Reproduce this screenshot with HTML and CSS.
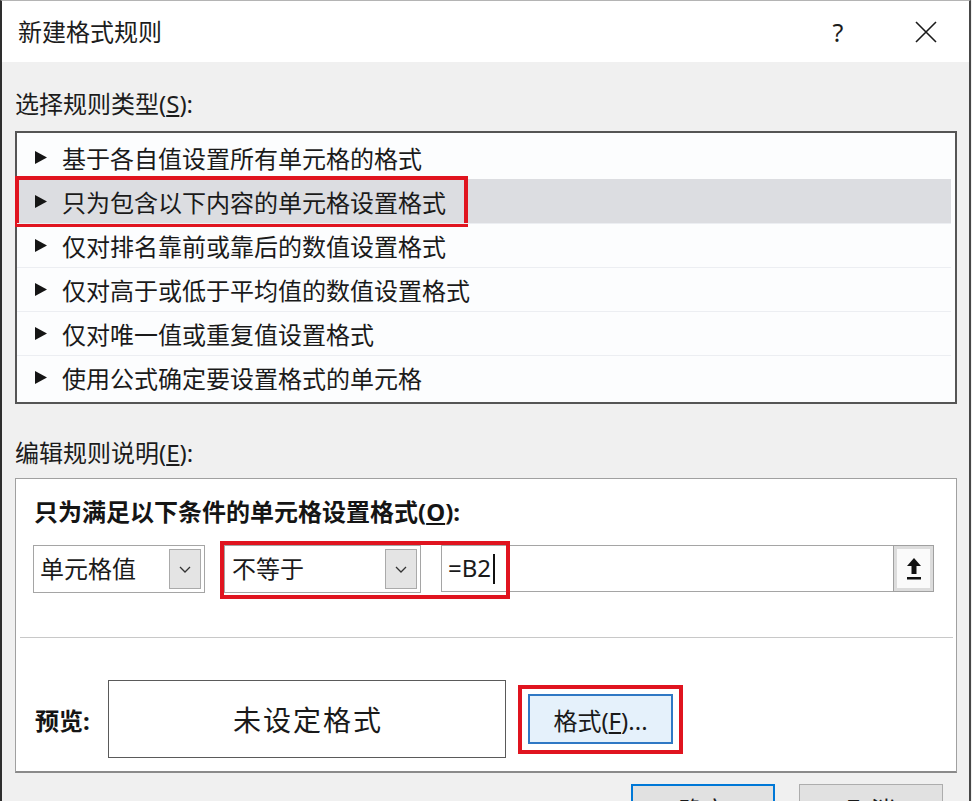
FILE: index.html
```html
<!DOCTYPE html>
<html lang="zh-CN">
<head>
<meta charset="utf-8">
<title>新建格式规则</title>
<link rel="stylesheet" href="styles.css">
</head>
<body>
<div class="window">
  <div class="titlebar">
    <span class="title">新建格式规则</span>
    <span class="tb-btn help">?</span>
    <span class="tb-btn close">
      <svg width="22" height="22" viewBox="0 0 22 22"><path d="M1 1 L21 21 M21 1 L1 21" stroke="#1a1a1a" stroke-width="1.6" fill="none"/></svg>
    </span>
  </div>
  <div class="content">
    <div class="section-label first">选择规则类型(<u>S</u>):</div>
    <div class="rule-list">
      <div class="rule"><svg class="tri" width="12" height="13" viewBox="0 0 12 13"><polygon points="0,0 12,6.5 0,13" fill="#151515"/></svg><span>基于各自值设置所有单元格的格式</span></div>
      <div class="rule selected"><svg class="tri" width="12" height="13" viewBox="0 0 12 13"><polygon points="0,0 12,6.5 0,13" fill="#151515"/></svg><span>只为包含以下内容的单元格设置格式</span><span class="mark mark-rule"></span></div>
      <div class="rule"><svg class="tri" width="12" height="13" viewBox="0 0 12 13"><polygon points="0,0 12,6.5 0,13" fill="#151515"/></svg><span>仅对排名靠前或靠后的数值设置格式</span></div>
      <div class="rule"><svg class="tri" width="12" height="13" viewBox="0 0 12 13"><polygon points="0,0 12,6.5 0,13" fill="#151515"/></svg><span>仅对高于或低于平均值的数值设置格式</span></div>
      <div class="rule"><svg class="tri" width="12" height="13" viewBox="0 0 12 13"><polygon points="0,0 12,6.5 0,13" fill="#151515"/></svg><span>仅对唯一值或重复值设置格式</span></div>
      <div class="rule"><svg class="tri" width="12" height="13" viewBox="0 0 12 13"><polygon points="0,0 12,6.5 0,13" fill="#151515"/></svg><span>使用公式确定要设置格式的单元格</span></div>
    </div>
    <div class="section-label second">编辑规则说明(<u>E</u>):</div>
    <div class="edit-panel">
      <div class="cond-label">只为满足以下条件的单元格设置格式(<u>O</u>):</div>
      <div class="cond-row">
        <div class="combo combo-a">
          <span class="combo-text">单元格值</span>
          <span class="dd"><svg width="12" height="7" viewBox="0 0 12 7"><polyline points="1,1 6,6 11,1" stroke="#333" stroke-width="1.3" fill="none"/></svg></span>
        </div>
        <div class="combo combo-b">
          <span class="combo-text">不等于</span>
          <span class="dd"><svg width="12" height="7" viewBox="0 0 12 7"><polyline points="1,1 6,6 11,1" stroke="#333" stroke-width="1.3" fill="none"/></svg></span>
        </div>
        <div class="input-group">
          <div class="input-field"><span class="val">=B2</span><span class="caret"></span></div>
          <span class="ref-btn"><svg width="16" height="24" viewBox="0 0 16 24"><path d="M8 1 L15 9 L10.5 9 L10.5 17 L5.5 17 L5.5 9 L1 9 Z" fill="#111"/><rect x="1" y="20" width="14" height="2.5" fill="#111"/></svg></span>
        </div>
        <span class="mark mark-cond"></span>
      </div>
      <div class="sep"></div>
      <div class="preview-row">
        <span class="preview-label">预览:</span>
        <div class="preview-box">未设定格式</div>
        <div class="format-wrap">
          <button class="format-btn">格式(<u>F</u>)...</button>
          <span class="mark mark-fmt"></span>
        </div>
      </div>
    </div>
    <div class="actions">
      <button class="btn primary">确定</button>
      <button class="btn">取消</button>
    </div>
  </div>
</div>
</body>
</html>
```

FILE: styles.css
```css
* { box-sizing: border-box; }
html, body {
  margin: 0;
  height: 801px;
  overflow: hidden;
  background: #f0f0f0;
}
body {
  font-family: "Noto Sans", "Noto Sans CJK SC", sans-serif;
  color: #1a1a1a;
}
.window {
  width: 971px;
  min-height: 801px;
  border-left: 2px solid #2e2e2e;
  border-right: 2px solid #474747;
  border-top: 1px solid #b4b4b4;
  background: #f0f0f0;
}
.titlebar {
  height: 61px;
  background: #ffffff;
  display: flex;
  align-items: center;
  padding-left: 16px;
  padding-right: 23px;
}
.title {
  font-size: 24px;
  line-height: 34px;
  color: #1c1c1c;
}
.tb-btn {
  width: 40px;
  height: 40px;
  display: flex;
  align-items: center;
  justify-content: center;
}
.help {
  margin-left: auto;
  font-size: 25px;
  color: #1c1c1c;
}
.close { margin-left: 48px; }
.content {
  padding: 0 12px 0 13px;
}
.section-label {
  font-size: 24px;
  line-height: 34px;
  color: #1c1c1c;
}
.section-label.first { margin-top: 25px; }
.section-label.second { margin-top: 32px; }
.rule-list {
  margin-top: 10px;
  border: 2px solid #555555;
  background: #fcfdfe;
  padding: 2px 4px 3px 0;
}
.rule {
  position: relative;
  height: 44px;
  display: flex;
  align-items: center;
  padding-left: 18px;
  font-size: 24px;
  color: #1a1a1a;
}
.rule + .rule { border-top: 1px solid #eceef2; }
.rule.selected { background: #dcdde1; border-top-color: #dcdde1; }
.tri { flex: none; margin-right: 15px; }
.mark {
  position: absolute;
  border: 4px solid #e0141f;
  pointer-events: none;
}
.mark-rule { left: -2px; top: -4px; width: 453px; height: 51px; }
.edit-panel {
  margin-top: 8px;
  background: #ffffff;
  border: 1px solid #a0a0a0;
  border-bottom: 2px solid #8a8a8a;
  padding-bottom: 13px;
}
.cond-label {
  margin: 16px 0 0 18px;
  font-size: 24px;
  line-height: 34px;
  font-weight: 700;
  color: #151515;
}
.cond-row {
  position: relative;
  margin-top: 16px;
  height: 48px;
  display: flex;
  align-items: flex-start;
  padding-left: 17px;
}
.combo {
  height: 48px;
  border: 1px solid #a5a5a5;
  display: flex;
  align-items: center;
  font-size: 24px;
  color: #1a1a1a;
}
.combo-text { flex: 1; margin-top: -4px; }
.combo-a { width: 172px; padding-left: 6px; padding-right: 3px; }
.combo-b { width: 197px; margin-left: 19px; padding-left: 7px; padding-right: 3px; }
.dd {
  width: 32px;
  height: 40px;
  background: #e4e4e4;
  border: 1px solid #aaaaaa;
  display: flex;
  align-items: center;
  justify-content: center;
}
.input-group {
  margin-left: 20px;
  width: 493px;
  height: 47px;
  display: flex;
}
.input-field {
  flex: 1;
  border: 1px solid #a5a5a5;
  border-right: none;
  display: flex;
  align-items: center;
  padding-left: 6px;
  font-size: 24px;
  color: #1a1a1a;
}
.val { margin-top: -3px; }
.caret {
  width: 2px;
  height: 30px;
  background: #111;
  margin-left: 2px;
}
.ref-btn {
  width: 41px;
  height: 47px;
  border: 1px solid #a0a0a0;
  background: #fafafa;
  box-shadow: inset 0 0 0 3px #dcdcdc;
  display: flex;
  align-items: center;
  justify-content: center;
}
.mark-cond { left: 204px; top: -4px; width: 290px; height: 58px; }
.sep {
  margin: 44px 3px 0 4px;
  height: 1px;
  background: #c8c8c8;
}
.preview-row {
  margin-top: 42px;
  display: flex;
  align-items: center;
  padding-left: 19px;
}
.preview-label {
  width: 73px;
  font-size: 24px;
  font-weight: 700;
  color: #151515;
}
.preview-box {
  width: 398px;
  height: 78px;
  border: 1px solid #5a5a5a;
  background: #ffffff;
  display: flex;
  align-items: center;
  justify-content: center;
  font-size: 28px;
  letter-spacing: 2px;
  padding-left: 2px;
  color: #1a1a1a;
}
.format-wrap {
  position: relative;
  margin-left: 22px;
}
.format-btn {
  display: block;
  width: 145px;
  height: 50px;
  background: #e5f1fb;
  border: 2px solid #2f78c4;
  font-family: "Noto Sans", "Noto Sans CJK SC", sans-serif;
  font-size: 24px;
  color: #1a1a1a;
  padding: 0;
}
.mark-fmt { left: -10px; top: -9px; width: 165px; height: 69px; }
.actions {
  margin-top: 11px;
  display: flex;
  justify-content: flex-end;
  gap: 24px;
  padding-right: 14px;
}
.btn {
  width: 144px;
  height: 48px;
  background: #e1e1e1;
  border: 1px solid #adadad;
  font-family: "Noto Sans", "Noto Sans CJK SC", sans-serif;
  font-size: 24px;
  color: #1a1a1a;
  padding: 0;
}
.btn.primary { border: 2px solid #0078d7; }
```
